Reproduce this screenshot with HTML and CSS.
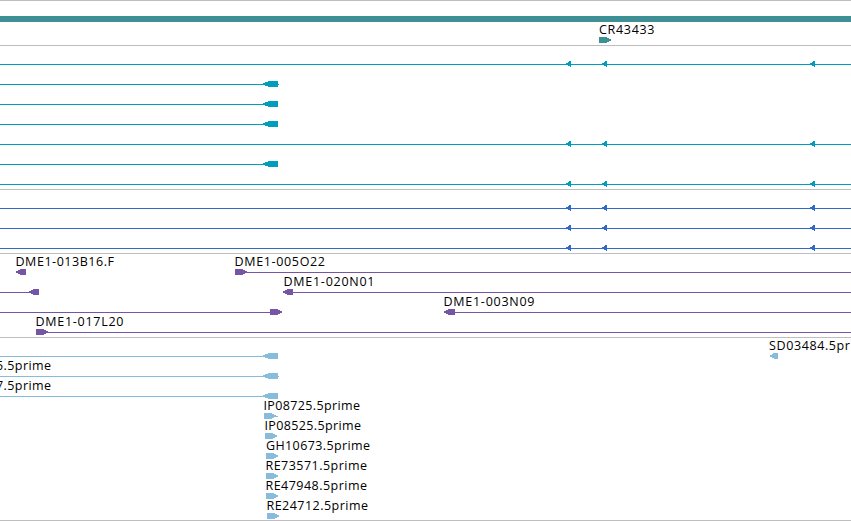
FILE: index.html
```
<!DOCTYPE html>
<html lang="en">
<head>
    <meta charset="UTF-8">
    <meta name="viewport" content="width=device-width, initial-scale=1.0">
    <title>Genome Browser</title>
    <link rel="stylesheet" href="styles.css">
</head>
<body>

<!-- Shared glyphs, drawn with the row's line at y = 3 -->
<svg class="glyphs">
    <defs>
        <path id="exonLeft" d="M0 2H2V1H5V0H15V6H5V5H2V4H0Z"/>
        <path id="arrow" d="M0 2H2V1H3V0H5V6H4V5H2V4H0Z"/>
        <path id="endLeft" d="M0 2H2V1H4V0H10V6H4V5H2V4H0Z"/>
        <path id="endRight" d="M0 0H8V1H10V2H12V4H10V5H8V6H0Z"/>
    </defs>
</svg>

<div class="browser">
    <!-- Genes -->
    <div class="track genes">
        <div class="gene-bar"></div>
        <svg class="row"><text x="599" y="12" textLength="55.5">CR43433</text><use href="#endRight" x="599" y="15"/></svg>
    </div>

    <!-- Transcripts -->
    <div class="track transcripts">
        <svg class="row"><rect y="18" width="851" height="1"/><use href="#arrow" x="566" y="15"/><use href="#arrow" x="602" y="15"/><use href="#arrow" x="810" y="15"/></svg>
        <svg class="row"><rect y="18" width="279" height="1"/><use href="#exonLeft" x="263" y="15"/></svg>
        <svg class="row"><rect y="18" width="270" height="1"/><use href="#exonLeft" x="263" y="15"/></svg>
        <svg class="row"><rect y="18" width="270" height="1"/><use href="#exonLeft" x="263" y="15"/></svg>
        <svg class="row"><rect y="18" width="851" height="1"/><use href="#arrow" x="566" y="15"/><use href="#arrow" x="602" y="15"/><use href="#arrow" x="810" y="15"/></svg>
        <svg class="row"><rect y="18" width="270" height="1"/><use href="#exonLeft" x="263" y="15"/></svg>
        <svg class="row"><rect y="18" width="851" height="1"/><use href="#arrow" x="566" y="15"/><use href="#arrow" x="602" y="15"/><use href="#arrow" x="810" y="15"/></svg>
    </div>

    <!-- Coding sequences -->
    <div class="track cds">
        <svg class="row"><rect y="18" width="851" height="1"/><use href="#arrow" x="566" y="15"/><use href="#arrow" x="602" y="15"/><use href="#arrow" x="810" y="15"/></svg>
        <svg class="row"><rect y="18" width="851" height="1"/><use href="#arrow" x="566" y="15"/><use href="#arrow" x="602" y="15"/><use href="#arrow" x="810" y="15"/></svg>
        <svg class="row"><rect y="18" width="851" height="1"/><use href="#arrow" x="566" y="15"/><use href="#arrow" x="602" y="15"/><use href="#arrow" x="810" y="15"/></svg>
    </div>

    <!-- Clones -->
    <div class="track clones">
        <svg class="row">
            <text x="15.5" y="12" textLength="98.5">DME1-013B16.F</text><use href="#endLeft" x="16" y="15"/>
            <text x="234.5" y="12" textLength="90.5">DME1-005O22</text><rect x="240" y="18" width="611" height="1"/><use href="#endRight" x="235" y="15"/>
        </svg>
        <svg class="row">
            <rect y="18" width="32" height="1"/><use href="#endLeft" x="29" y="15"/>
            <text x="283.5" y="12" textLength="91">DME1-020N01</text><rect x="288" y="18" width="563" height="1"/><use href="#endLeft" x="283" y="15"/>
        </svg>
        <svg class="row">
            <rect y="18" width="276" height="1"/><use href="#endRight" x="270" y="15"/>
            <text x="443.5" y="12" textLength="91">DME1-003N09</text><rect x="450" y="18" width="401" height="1"/><use href="#endLeft" x="444" y="15"/><rect x="454" y="15" width="1" height="6"/>
        </svg>
        <svg class="row">
            <text x="35.5" y="12" textLength="88">DME1-017L20</text><rect x="40" y="18" width="811" height="1"/><use href="#endRight" x="36" y="15"/>
        </svg>
    </div>

    <!-- ESTs -->
    <div class="track ests">
        <svg class="row">
            <rect y="18" width="270" height="1"/><use href="#exonLeft" x="263" y="15"/>
            <text x="769" y="12" textLength="104.5">SD03484.5prime</text><use href="#arrow" x="770" y="15"/><rect x="775" y="15" width="3" height="6"/>
        </svg>
        <svg class="row"><text x="-4" y="12" textLength="55">5.5prime</text><rect y="18" width="279" height="1"/><use href="#exonLeft" x="263" y="15"/></svg>
        <svg class="row"><text x="-4" y="12" textLength="55">7.5prime</text><rect y="18" width="270" height="1"/><use href="#exonLeft" x="263" y="15"/></svg>
        <svg class="row"><text x="263.5" y="12" textLength="96.5">IP08725.5prime</text><use href="#endRight" x="264" y="15"/><rect x="276" y="18" width="2" height="1"/></svg>
        <svg class="row"><text x="264.5" y="12" textLength="96.5">IP08525.5prime</text><use href="#endRight" x="265" y="15"/></svg>
        <svg class="row"><text x="266" y="12" textLength="104">GH10673.5prime</text><use href="#endRight" x="266" y="15"/></svg>
        <svg class="row"><text x="265.5" y="12" textLength="101.5">RE73571.5prime</text><use href="#endRight" x="266" y="15"/></svg>
        <svg class="row"><text x="265.5" y="12" textLength="101.5">RE47948.5prime</text><use href="#endRight" x="266" y="15"/></svg>
        <svg class="row"><text x="266.5" y="12" textLength="101.5">RE24712.5prime</text><use href="#endRight" x="267" y="15"/></svg>
    </div>
</div>

</body>
</html>
```
FILE: styles.css
```
body {
    margin: 0;
    background-color: white;
    overflow: hidden;
}

.glyphs {
    display: none;
}

.browser {
    width: 851px;
    border-top: 1px solid #bebebe;
}

.track {
    padding-bottom: 3px;
    border-bottom: 1px solid #bebebe;
}

/* One 20px line of features */
.row {
    display: block;
    width: 851px;
    height: 20px;
    overflow: visible;
    shape-rendering: crispEdges;
}

.row text {
    font-family: "Open Sans", "Noto Sans", sans-serif;
    font-size: 12.5px;
    fill: black;
}

.genes {
    padding-top: 15px;
    padding-bottom: 3px;
    fill: #3d9094;
}

.gene-bar {
    height: 6px;
    background-color: #3d9094;
}

.transcripts {
    fill: #009dbe;
}

.cds {
    fill: #2f6bc9;
}

.clones {
    fill: #7556a6;
}

.ests {
    fill: #87bcdd;
    padding-bottom: 2px;
}
```
